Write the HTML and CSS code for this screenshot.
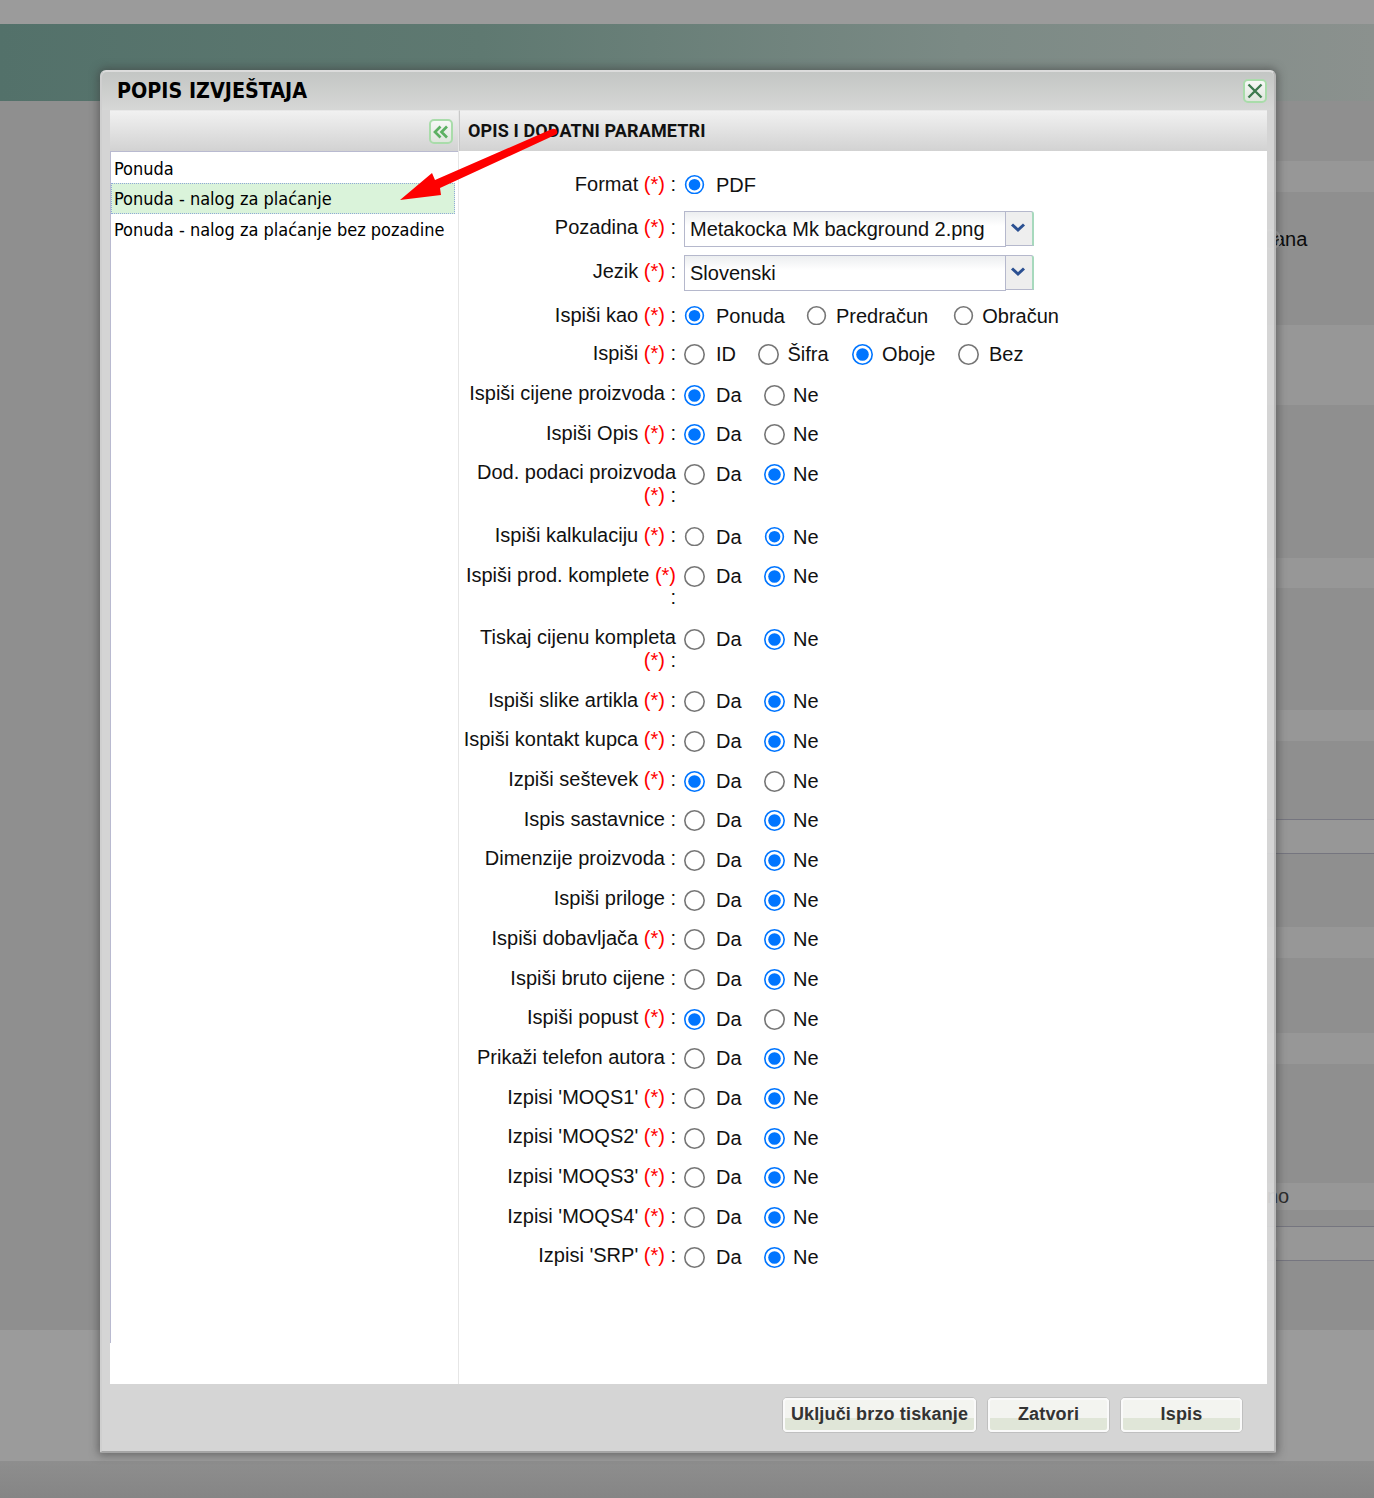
FILE: index.html
```html
<!DOCTYPE html>
<html lang="hr">
<head>
<meta charset="utf-8">
<title>Popis izvještaja</title>
<link rel="stylesheet" href="styles.css">
</head>
<body>
<div class="page">
  <div class="top-strip"></div>
  <div class="teal-bar"></div>
  <div class="mid">
    <div class="bands">
      <div class="band h60"></div>
      <div class="band light h31"></div>
      <div class="band h133 ghost-ana"><span class="ghost-radio"></span>ana</div>
      <div class="band light h80"></div>
      <div class="band h153"></div>
      <div class="band light h30"></div>
      <div class="band h122"></div>
      <div class="band light h31"></div>
      <div class="band h78"></div>
      <div class="band light lined h35"></div>
      <div class="band h73"></div>
      <div class="band light h31"></div>
      <div class="band h75"></div>
      <div class="band light h31"></div>
      <div class="band h119"></div>
      <div class="band light h27 ghost-no">no</div>
      <div class="band h16"></div>
      <div class="band light lined h35 ghost-o">o</div>
      <div class="band h69"></div>
    </div>
  </div>
  <div class="low-band"></div>
  <div class="foot"></div>
</div>

<section class="modal">
  <header class="modal-title">
    <h1>POPIS IZVJEŠTAJA</h1>
    <button class="icon-btn close-btn" aria-label="Zatvori">
      <svg width="18" height="18" viewBox="0 0 18 18"><path d="M2.500 2.500 15.500 15.500M15.500 2.500 2.500 15.500" fill="none" stroke="#3d7a4e" stroke-width="2.400"/></svg>
    </button>
  </header>
  <div class="modal-body">
    <aside class="left-panel">
      <div class="panel-head left-head">
        <button class="icon-btn collapse-btn" aria-label="Skupi">
          <svg width="16" height="14" viewBox="0 0 16 14"><path d="M7.500 1.500 2 7l5.500 5.500M14 1.500 8.500 7l5.500 5.500" fill="none" stroke="#5cb062" stroke-width="2.700"/></svg>
        </button>
      </div>
      <ul class="report-list">
        <li>Ponuda</li>
        <li class="selected">Ponuda - nalog za plaćanje</li>
        <li>Ponuda - nalog za plaćanje bez pozadine</li>
      </ul>
      <div class="left-rest"></div>
    </aside>
    <main class="right-panel">
      <div class="panel-head right-head">OPIS I DODATNI PARAMETRI</div>
      <form class="params">
        <div class="row row-format"><div class="lbl">Format <em>(*)</em> :</div><div class="opts"><label><input type="radio" name="f" checked>PDF</label></div></div>
        <div class="row row-pozadina"><div class="lbl lbl-sel">Pozadina <em>(*)</em> :</div><div class="select"><div class="sel-value">Metakocka Mk background 2.png</div><div class="sel-btn"><svg width="16" height="10" viewBox="0 0 16 10"><path d="M2 1.500 8 7l6-5.500" fill="none" stroke="#2b5092" stroke-width="3"/></svg></div></div></div>
        <div class="row row-jezik"><div class="lbl lbl-sel">Jezik <em>(*)</em> :</div><div class="select"><div class="sel-value">Slovenski</div><div class="sel-btn"><svg width="16" height="10" viewBox="0 0 16 10"><path d="M2 1.500 8 7l6-5.500" fill="none" stroke="#2b5092" stroke-width="3"/></svg></div></div></div>
        <div class="row row-kao"><div class="lbl">Ispiši kao <em>(*)</em> :</div><div class="opts gap-kao"><label><input type="radio" name="k" checked>Ponuda</label><label class="wide"><input type="radio" name="k">Predračun</label><label><input type="radio" name="k">Obračun</label></div></div>
        <div class="row row-ispisi"><div class="lbl">Ispiši <em>(*)</em> :</div><div class="opts gap-ispisi"><label><input type="radio" name="i">ID</label><label class="tight"><input type="radio" name="i">Šifra</label><label><input type="radio" name="i" checked>Oboje</label><label><input type="radio" name="i">Bez</label></div></div>
        <div class="row"><div class="lbl">Ispiši cijene proizvoda :</div><div class="opts"><label><input type="radio" name="a1" checked>Da</label><label><input type="radio" name="a1">Ne</label></div></div>
        <div class="row"><div class="lbl">Ispiši Opis <em>(*)</em> :</div><div class="opts"><label><input type="radio" name="a2" checked>Da</label><label><input type="radio" name="a2">Ne</label></div></div>
        <div class="row row-two"><div class="lbl">Dod. podaci proizvoda <em>(*)</em> :</div><div class="opts"><label><input type="radio" name="a3">Da</label><label><input type="radio" name="a3" checked>Ne</label></div></div>
        <div class="row"><div class="lbl">Ispiši kalkulaciju <em>(*)</em> :</div><div class="opts"><label><input type="radio" name="a4">Da</label><label><input type="radio" name="a4" checked>Ne</label></div></div>
        <div class="row row-two"><div class="lbl">Ispiši prod. komplete <em>(*)</em> :</div><div class="opts"><label><input type="radio" name="a5">Da</label><label><input type="radio" name="a5" checked>Ne</label></div></div>
        <div class="row row-two"><div class="lbl">Tiskaj cijenu kompleta <em>(*)</em> :</div><div class="opts"><label><input type="radio" name="a6">Da</label><label><input type="radio" name="a6" checked>Ne</label></div></div>
        <div class="row"><div class="lbl">Ispiši slike artikla <em>(*)</em> :</div><div class="opts"><label><input type="radio" name="a7">Da</label><label><input type="radio" name="a7" checked>Ne</label></div></div>
        <div class="row"><div class="lbl">Ispiši kontakt kupca <em>(*)</em> :</div><div class="opts"><label><input type="radio" name="a8">Da</label><label><input type="radio" name="a8" checked>Ne</label></div></div>
        <div class="row"><div class="lbl">Izpiši seštevek <em>(*)</em> :</div><div class="opts"><label><input type="radio" name="a9" checked>Da</label><label><input type="radio" name="a9">Ne</label></div></div>
        <div class="row"><div class="lbl">Ispis sastavnice :</div><div class="opts"><label><input type="radio" name="a10">Da</label><label><input type="radio" name="a10" checked>Ne</label></div></div>
        <div class="row"><div class="lbl">Dimenzije proizvoda :</div><div class="opts"><label><input type="radio" name="a11">Da</label><label><input type="radio" name="a11" checked>Ne</label></div></div>
        <div class="row"><div class="lbl">Ispiši priloge :</div><div class="opts"><label><input type="radio" name="a12">Da</label><label><input type="radio" name="a12" checked>Ne</label></div></div>
        <div class="row"><div class="lbl">Ispiši dobavljača <em>(*)</em> :</div><div class="opts"><label><input type="radio" name="a13">Da</label><label><input type="radio" name="a13" checked>Ne</label></div></div>
        <div class="row"><div class="lbl">Ispiši bruto cijene :</div><div class="opts"><label><input type="radio" name="a14">Da</label><label><input type="radio" name="a14" checked>Ne</label></div></div>
        <div class="row"><div class="lbl">Ispiši popust <em>(*)</em> :</div><div class="opts"><label><input type="radio" name="a15" checked>Da</label><label><input type="radio" name="a15">Ne</label></div></div>
        <div class="row"><div class="lbl">Prikaži telefon autora :</div><div class="opts"><label><input type="radio" name="a16">Da</label><label><input type="radio" name="a16" checked>Ne</label></div></div>
        <div class="row"><div class="lbl">Izpisi 'MOQS1' <em>(*)</em> :</div><div class="opts"><label><input type="radio" name="a17">Da</label><label><input type="radio" name="a17" checked>Ne</label></div></div>
        <div class="row"><div class="lbl">Izpisi 'MOQS2' <em>(*)</em> :</div><div class="opts"><label><input type="radio" name="a18">Da</label><label><input type="radio" name="a18" checked>Ne</label></div></div>
        <div class="row"><div class="lbl">Izpisi 'MOQS3' <em>(*)</em> :</div><div class="opts"><label><input type="radio" name="a19">Da</label><label><input type="radio" name="a19" checked>Ne</label></div></div>
        <div class="row"><div class="lbl">Izpisi 'MOQS4' <em>(*)</em> :</div><div class="opts"><label><input type="radio" name="a20">Da</label><label><input type="radio" name="a20" checked>Ne</label></div></div>
        <div class="row"><div class="lbl">Izpisi 'SRP' <em>(*)</em> :</div><div class="opts"><label><input type="radio" name="a21">Da</label><label><input type="radio" name="a21" checked>Ne</label></div></div>
      </form>
    </main>
  </div>
  <footer class="modal-foot">
    <button class="btn btn-wide">Uključi brzo tiskanje</button>
    <button class="btn">Zatvori</button>
    <button class="btn">Ispis</button>
  </footer>
</section>

<svg class="arrow" width="170" height="80" viewBox="0 0 170 80">
  <path d="M5 75 37 48l3 7L157 4q4-1 5 2t-2 4L45 63l1 7z" fill="#fe0000"/>
</svg>
</body>
</html>
```
FILE: styles.css
```css
* { box-sizing: border-box; }
html, body { margin: 0; padding: 0; }
body {
  width: 1374px;
  height: 1498px;
  overflow: hidden;
  position: relative;
  font-family: "Liberation Sans", Arial, sans-serif;
  background: #8f8f8f;
}
.top-strip { height: 24px; background: #9b9b9b; }
.teal-bar {
  height: 77px;
  background: linear-gradient(90deg, #53716a 0%, #5f7971 35%, #7b8a85 70%, #8b918e 100%);
}
.mid { height: 1229px; display: flex; justify-content: flex-end; background: #8f8f8f; }
.bands { width: 300px; }
.band { background: #8f8f8f; position: relative; }
.band.light { background: #979797; }
.band.lined { border-top: 1px solid #75757f; border-bottom: 1px solid #75757f; }
.h16 { height: 16px; } .h27 { height: 27px; } .h30 { height: 30px; } .h31 { height: 31px; }
.h35 { height: 35px; } .h60 { height: 60px; } .h69 { height: 69px; } .h73 { height: 73px; }
.h75 { height: 75px; } .h78 { height: 78px; } .h80 { height: 80px; } .h119 { height: 119px; }
.h122 { height: 122px; } .h133 { height: 133px; } .h153 { height: 153px; }
.ghost-ana {
  font-size: 20px; line-height: 23px; color: #0c0c0c;
  padding: 36px 0 0 200px;
}
.ghost-radio {
  position: absolute; left: 186px; top: 37px;
  width: 21px; height: 21px; border-radius: 50%; border: 2px solid #a9a9a9;
}
.ghost-no { font-size: 20px; line-height: 27px; color: #2b2b2b; padding-left: 193px; }
.ghost-o { font-size: 20px; line-height: 33px; color: #a0a0a0; padding-left: 193px; }
.low-band { height: 131px; background: #9b9b9b; }
.foot { height: 37px; background: linear-gradient(#8e8e8e, #858585); }

.modal {
  position: absolute;
  left: 100px; top: 70px;
  width: 1176px; height: 1383px;
  background: rgba(217, 217, 217, 0.93);
  border-radius: 6px 6px 2px 2px;
  border-top: 2px solid #dcdcdc;
  border-left: 2px solid #cfcfcf;
  border-right: 2px solid #b8b8b8;
  border-bottom: 2px solid #a5a5a5;
  box-shadow: 0 0 9px 2px rgba(60, 60, 60, 0.55);
  display: flex;
  flex-direction: column;
}
.modal-title {
  height: 38px;
  flex: none;
  padding: 6px 7px 0 15px;
  display: flex;
  justify-content: space-between;
  background: linear-gradient(#c3c6c4, #d6d7d6);
  border-radius: 5px 5px 0 0;
}
.modal-title h1 {
  margin: 0;
  font-family: "DejaVu Sans Condensed", "DejaVu Sans", sans-serif;
  font-stretch: condensed;
  font-size: 21.300px;
  line-height: 26px;
  font-weight: 700;
  color: #000;
}
.icon-btn {
  padding: 0;
  border: 2px solid #a9dcaa;
  border-radius: 5px;
  background: linear-gradient(#f7f8f6, #dfe6dd);
  display: flex;
  align-items: center;
  justify-content: center;
  flex: none;
}
.close-btn { width: 24px; height: 24px; margin-top: 1px; }
.collapse-btn { width: 24px; height: 25px; }

.modal-body { flex: 1; display: flex; padding: 0 7px 0 8px; min-height: 0; }
.panel-head {
  height: 41px;
  background: linear-gradient(#f1f1f1, #d2d2d2);
  border-top: 1px solid #e8e8e8;
}
.left-panel { width: 349px; flex: none; display: flex; flex-direction: column; background: #fff; border-right: 1px solid #e6e6e6; }
.left-head { display: flex; justify-content: flex-end; padding: 8px 5px 0 0; flex: none; background-color: #ddd; }
.report-list {
  list-style: none;
  margin: 0;
  padding: 0;
  height: 1192px;
  flex: none;
  border-left: 1px solid #b9bad0;
  border-top: 1px solid #b9bad0;
  font-family: "DejaVu Sans Condensed", "DejaVu Sans", sans-serif;
  font-stretch: condensed;
  font-size: 18px;
  color: #000;
}
.report-list li { height: 31px; line-height: 31px; padding: 0 0 0 3px; width: 344px; }
.report-list li:first-child { padding-top: 1px; }
.report-list li.selected { background: #daf3da; outline: 1px dotted #8fa8d8; outline-offset: -1px; }
.left-rest { flex: 1; background: #fff; }

.right-panel { flex: 1; background: #fff; display: flex; flex-direction: column; min-width: 0; }
.right-head {
  font-family: Roboto, "Liberation Sans", sans-serif;
  font-size: 18px; font-weight: 700; line-height: 39px; padding-left: 8px; color: #111;
  letter-spacing: 0.120px;
  border-left: 1px solid #c9c9c9;
  flex: none;
}
.params { padding: 14.500px 0 0 2px; font-size: 20px; color: #111; }
.row { display: flex; align-items: flex-start; min-height: 39.680px; }
.row-two { padding-bottom: 0.600px; }
.row-format { min-height: 41px; }
.row-pozadina { min-height: 44px; }
.row-jezik { min-height: 46px; }
.row-kao { min-height: 38.300px; }
.row-ispisi { min-height: 40.800px; }
.lbl {
  width: 215px;
  flex: none;
  text-align: right;
  line-height: 22.300px;
  padding: 6.500px 0 10.880px;
}
.row-format .lbl, .row-kao .lbl, .row-ispisi .lbl { padding-top: 7.500px; padding-bottom: 0; }
.lbl.lbl-sel { padding-top: 9.500px; padding-bottom: 0; }
.lbl em { font-style: normal; color: #f00; }
.opts { display: flex; padding: 9px 0 0 8px; }
.opts label { display: flex; align-items: center; gap: 8.500px; height: 21px; line-height: 21px; margin-right: 22px; }
.opts label:first-child { gap: 11px; }
.opts input {
  width: 13px;
  height: 13px;
  margin: 0;
  flex: none;
  zoom: 1.615;
  accent-color: #0075ff;
}
.gap-kao label { margin-right: 21.500px; }
.gap-kao label.wide { margin-right: 24.500px; }
.gap-ispisi label { margin-right: 23px; gap: 9.500px; }
.gap-ispisi label:first-child { margin-right: 22px; }
.gap-ispisi label.tight { gap: 8.500px; }
.select { display: flex; margin: 4.500px 0 0 8px; height: 36px; width: 350px; }
.sel-value {
  width: 322px;
  flex: none;
  border: 1px solid #b5b8cc;
  background: linear-gradient(#eceef0 0, #fff 14px);
  padding-left: 5px;
  line-height: 34px;
  color: #111;
}
.sel-btn {
  width: 28px;
  flex: none;
  height: 35px;
  background: #eeeeee;
  border-top: 1px solid #b5b8cc;
  border-bottom: 1px solid #b5b8cc;
  border-right: 2px solid #a7d9bd;
  border-radius: 0 3px 0 0;
  display: flex;
  justify-content: center;
  padding-top: 11px;
}
.sel-btn svg { margin-left: -3px; }

.modal-foot {
  height: 67px;
  flex: none;
  display: flex;
  justify-content: flex-end;
  gap: 10px;
  padding: 13px 31px 0 0;
}
.btn {
  width: 123px;
  height: 36px;
  padding: 0 0 2px;
  border: 1px solid #c0c0c0;
  outline: 2px solid #fafafa;
  outline-offset: -3px;
  border-radius: 5px;
  background: linear-gradient(#f3f4f0 0, #f3f4f0 58%, #e0e6d8 58%, #e0e6d8 100%);
  font-family: "Liberation Sans", Arial, sans-serif;
  font-size: 18px;
  font-weight: 700;
  color: #333;
  letter-spacing: 0.150px;
}
.btn-wide { width: 195px; }

.arrow { position: absolute; left: 395px; top: 125px; }
```
